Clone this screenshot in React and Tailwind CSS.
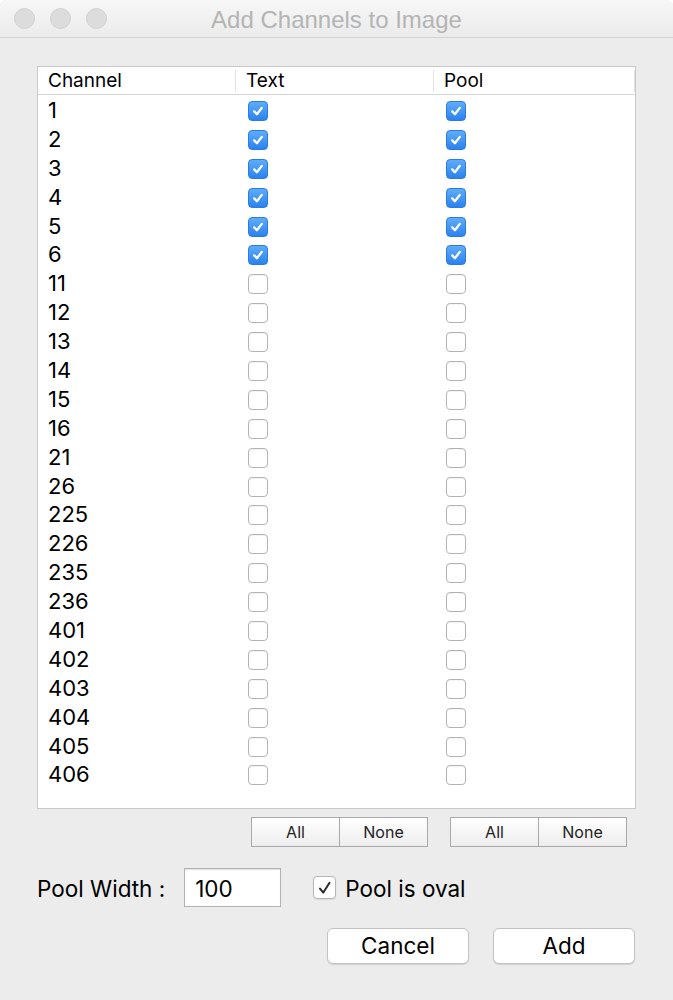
import React from "react";

const rows = [
  { id: "1", text: true, pool: true },
  { id: "2", text: true, pool: true },
  { id: "3", text: true, pool: true },
  { id: "4", text: true, pool: true },
  { id: "5", text: true, pool: true },
  { id: "6", text: true, pool: true },
  ...["11", "12", "13", "14", "15", "16", "21", "26", "225", "226", "235", "236", "401", "402", "403", "404", "405", "406"].map(
    (id) => ({ id, text: false, pool: false })
  ),
];

function Check({ on }) {
  if (on) {
    return (
      <div className="w-[20px] h-[20px] rounded-[4px] bg-gradient-to-b from-[#5eacfa] to-[#2b82ee] border border-[#2a7de0] flex items-center justify-center">
        <svg width="14" height="14" viewBox="0 0 14 14">
          <path d="M3.2 7.4 L5.9 10.2 L10.8 3.9" fill="none" stroke="white" strokeWidth="2.3" strokeLinecap="round" strokeLinejoin="round" />
        </svg>
      </div>
    );
  }
  return <div className="w-[20px] h-[20px] rounded-[4px] bg-white border-[1.5px] border-[#b3b3b3] shadow-[inset_0_1px_1px_rgba(0,0,0,0.05)]" />;
}

function Segmented() {
  return (
    <div className="flex w-[177px] h-[30px] border border-[#a9a9a9] bg-gradient-to-b from-[#ffffff] to-[#ededed] text-[16px] text-[#222]">
      <div className="w-[88px] flex items-center justify-center border-r border-[#a9a9a9]">All</div>
      <div className="flex-1 flex items-center justify-center">None</div>
    </div>
  );
}

export default function App() {
  return (
    <div className="bg-white w-[673px] h-[1000px] font-['Inter',sans-serif] text-black">
      <div className="h-full rounded-t-[6px] overflow-hidden bg-[#ececec]">
        {/* title bar */}
        <div className="h-[38px] border-b border-[#d2d2d2] bg-gradient-to-b from-[#f7f7f7] to-[#ebebeb] flex items-center relative">
          <div className="flex gap-[15px] pl-[14px]">
            <div className="w-[21px] h-[21px] rounded-full bg-[#dcdcdc] border border-[#d0d0d0]" />
            <div className="w-[21px] h-[21px] rounded-full bg-[#dcdcdc] border border-[#d0d0d0]" />
            <div className="w-[21px] h-[21px] rounded-full bg-[#dcdcdc] border border-[#d0d0d0]" />
          </div>
          <div className="absolute inset-0 flex items-center justify-center pt-[2px] text-[24px] text-[#b4b4b4] font-['Liberation_Sans',sans-serif]">
            Add Channels to Image
          </div>
        </div>

        {/* table */}
        <div className="ml-[37px] mt-[28px] w-[599px] h-[743px] border border-[#c9c9c9] bg-white">
          <div className="h-[28px] border-b border-[#d6d6d6] grid grid-cols-[197px_198px_1fr] text-[19px] items-center">
            <div className="pl-[10px]">Channel</div>
            <div className="flex items-center">
              <div className="w-px h-[22px] bg-[#e2e2e2]" />
              <span className="pl-[10px]">Text</span>
            </div>
            <div className="flex items-center">
              <div className="w-px h-[22px] bg-[#e2e2e2]" />
              <span className="pl-[10px]">Pool</span>
              <div className="ml-auto w-px h-[22px] bg-[#e2e2e2]" />
            </div>
          </div>
          <div>
            {rows.map((r) => (
              <div key={r.id} className="h-[28.9px] grid grid-cols-[197px_198px_1fr] items-center text-[22px]">
                <div className="pl-[10px] -mt-[1px]">{r.id}</div>
                <div className="pl-[13px]">
                  <Check on={r.text} />
                </div>
                <div className="pl-[13px]">
                  <Check on={r.pool} />
                </div>
              </div>
            ))}
          </div>
        </div>

        {/* all / none */}
        <div className="flex gap-[22px] ml-[251px] mt-[8px]">
          <Segmented />
          <Segmented />
        </div>

        {/* pool width */}
        <div className="flex items-center ml-[37px] mt-[21px] h-[39px] text-[22.5px]">
          <span className="pt-[3px]">Pool Width :</span>
          <div className="ml-[19px] w-[97px] h-[39px] bg-white border border-[#b2b2b2] shadow-[inset_0_1px_1px_rgba(0,0,0,0.12)] flex items-center pl-[10px] pt-[2px]">
            100
          </div>
          <div className="ml-[32px] w-[23px] h-[23px] rounded-[4px] bg-white border border-[#b5b5b5] shadow-[0_1px_1px_rgba(0,0,0,0.08)] flex items-center justify-center">
            <svg width="18" height="18" viewBox="0 0 17 17">
              <path d="M3.8 9 L6.9 12.8 L12.8 3.6" fill="none" stroke="#2a2a2a" strokeWidth="1.9" strokeLinecap="round" strokeLinejoin="round" />
            </svg>
          </div>
          <span className="ml-[9px] pt-[2px]">Pool is oval</span>
        </div>

        {/* actions */}
        <div className="flex justify-end gap-[24px] mt-[21px] pr-[38px] text-[22.5px]">
          <button className="w-[142px] h-[36px] rounded-[6px] bg-white border border-[#c3c3c3] shadow-[0_1px_1px_rgba(0,0,0,0.12)]">
            Cancel
          </button>
          <button className="w-[142px] h-[36px] rounded-[6px] bg-white border border-[#c3c3c3] shadow-[0_1px_1px_rgba(0,0,0,0.12)]">
            Add
          </button>
        </div>
      </div>
    </div>
  );
}
